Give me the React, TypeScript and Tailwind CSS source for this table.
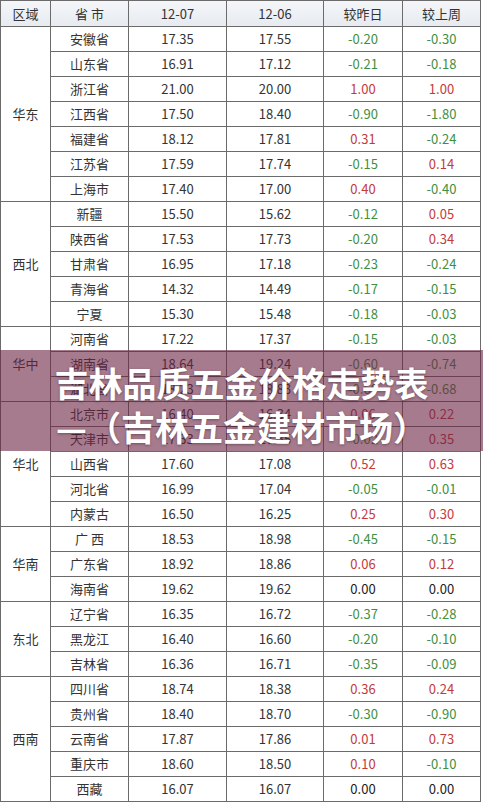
import React from 'react';

type Row = [string, string, string, string, string];

interface Region {
  name: string;
  rows: Row[];
}

const REGIONS: Region[] = [
  {
    name: '华东',
    rows: [
      ['安徽省', '17.35', '17.55', '-0.20', '-0.30'],
      ['山东省', '16.91', '17.12', '-0.21', '-0.18'],
      ['浙江省', '21.00', '20.00', '1.00', '1.00'],
      ['江西省', '17.50', '18.40', '-0.90', '-1.80'],
      ['福建省', '18.12', '17.81', '0.31', '-0.24'],
      ['江苏省', '17.59', '17.74', '-0.15', '0.14'],
      ['上海市', '17.40', '17.00', '0.40', '-0.40'],
    ],
  },
  {
    name: '西北',
    rows: [
      ['新疆', '15.50', '15.62', '-0.12', '0.05'],
      ['陕西省', '17.53', '17.73', '-0.20', '0.34'],
      ['甘肃省', '16.95', '17.18', '-0.23', '-0.24'],
      ['青海省', '14.32', '14.49', '-0.17', '-0.15'],
      ['宁夏', '15.30', '15.48', '-0.18', '-0.03'],
    ],
  },
  {
    name: '华中',
    rows: [
      ['河南省', '17.22', '17.37', '-0.15', '-0.03'],
      ['湖南省', '18.64', '19.24', '-0.60', '-0.74'],
      ['湖北省', '18.23', '18.83', '-0.60', '-0.68'],
    ],
  },
  {
    name: '华北',
    rows: [
      ['北京市', '16.40', '16.34', '0.06', '0.22'],
      ['天津市', '17.33', '17.35', '-0.02', '0.35'],
      ['山西省', '17.60', '17.08', '0.52', '0.63'],
      ['河北省', '16.99', '17.04', '-0.05', '-0.01'],
      ['内蒙古', '16.50', '16.25', '0.25', '0.30'],
    ],
  },
  {
    name: '华南',
    rows: [
      ['广 西', '18.53', '18.98', '-0.45', '-0.15'],
      ['广东省', '18.92', '18.86', '0.06', '0.12'],
      ['海南省', '19.62', '19.62', '0.00', '0.00'],
    ],
  },
  {
    name: '东北',
    rows: [
      ['辽宁省', '16.35', '16.72', '-0.37', '-0.28'],
      ['黑龙江', '16.40', '16.60', '-0.20', '-0.10'],
      ['吉林省', '16.36', '16.71', '-0.35', '-0.09'],
    ],
  },
  {
    name: '西南',
    rows: [
      ['四川省', '18.74', '18.38', '0.36', '0.24'],
      ['贵州省', '18.40', '18.70', '-0.30', '-0.90'],
      ['云南省', '17.87', '17.86', '0.01', '0.73'],
      ['重庆市', '18.60', '18.50', '0.10', '-0.10'],
      ['西藏', '16.07', '16.07', '0.00', '0.00'],
    ],
  },
];

function changeColor(value: string): string {
  const n = parseFloat(value);
  if (n > 0) return 'text-[#c43a3a]';
  if (n < 0) return 'text-[#3f8f3f]';
  return 'text-[#222]';
}

const cell = 'border border-[#6b6b6b] text-center align-middle p-0';

export default function App() {
  return (
    <div className="relative h-[805px] w-[483px] overflow-hidden bg-white font-['Noto_Sans_CJK_SC',sans-serif] text-[13px] text-[#333]">
      <table className="w-[481px] table-fixed border-collapse">
        <colgroup>
          <col className="w-[50px]" />
          <col className="w-[78px]" />
          <col className="w-[98px]" />
          <col className="w-[97px]" />
          <col className="w-[79px]" />
          <col className="w-[78px]" />
        </colgroup>
        <thead>
          <tr className="h-[26px] bg-gradient-to-b from-[#f4f6f9] to-[#e6eaf0]">
            <th className={`${cell} font-normal`}>区域</th>
            <th className={`${cell} font-normal`}>省 市</th>
            <th className={`${cell} font-normal`}>12-07</th>
            <th className={`${cell} font-normal`}>12-06</th>
            <th className={`${cell} font-normal`}>较昨日</th>
            <th className={`${cell} font-normal`}>较上周</th>
          </tr>
        </thead>
        <tbody>
          {REGIONS.map((region) =>
            region.rows.map((row, i) => (
              <tr key={row[0]} className="h-[25px]">
                {i === 0 && (
                  <td rowSpan={region.rows.length} className={cell}>
                    {region.name}
                  </td>
                )}
                <td className={`${cell} whitespace-pre`}>{row[0]}</td>
                <td className={cell}>{row[1]}</td>
                <td className={cell}>{row[2]}</td>
                <td className={`${cell} ${changeColor(row[3])}`}>{row[3]}</td>
                <td className={`${cell} ${changeColor(row[4])}`}>{row[4]}</td>
              </tr>
            )),
          )}
        </tbody>
      </table>

      <div className="absolute left-0 right-0 top-[350px] flex h-[101px] flex-col items-center justify-center bg-[rgba(108,35,67,0.6)] pt-[8px]">
        <div className="text-[34px] font-bold leading-[44px] tracking-[0px] text-white [text-shadow:0_1px_3px_rgba(0,0,0,0.35)]">
          吉林品质五金价格走势表
        </div>
        <div className="text-[34px] font-bold leading-[44px] text-white [text-shadow:0_1px_3px_rgba(0,0,0,0.35)]">
          —（吉林五金建材市场）
        </div>
      </div>
    </div>
  );
}
